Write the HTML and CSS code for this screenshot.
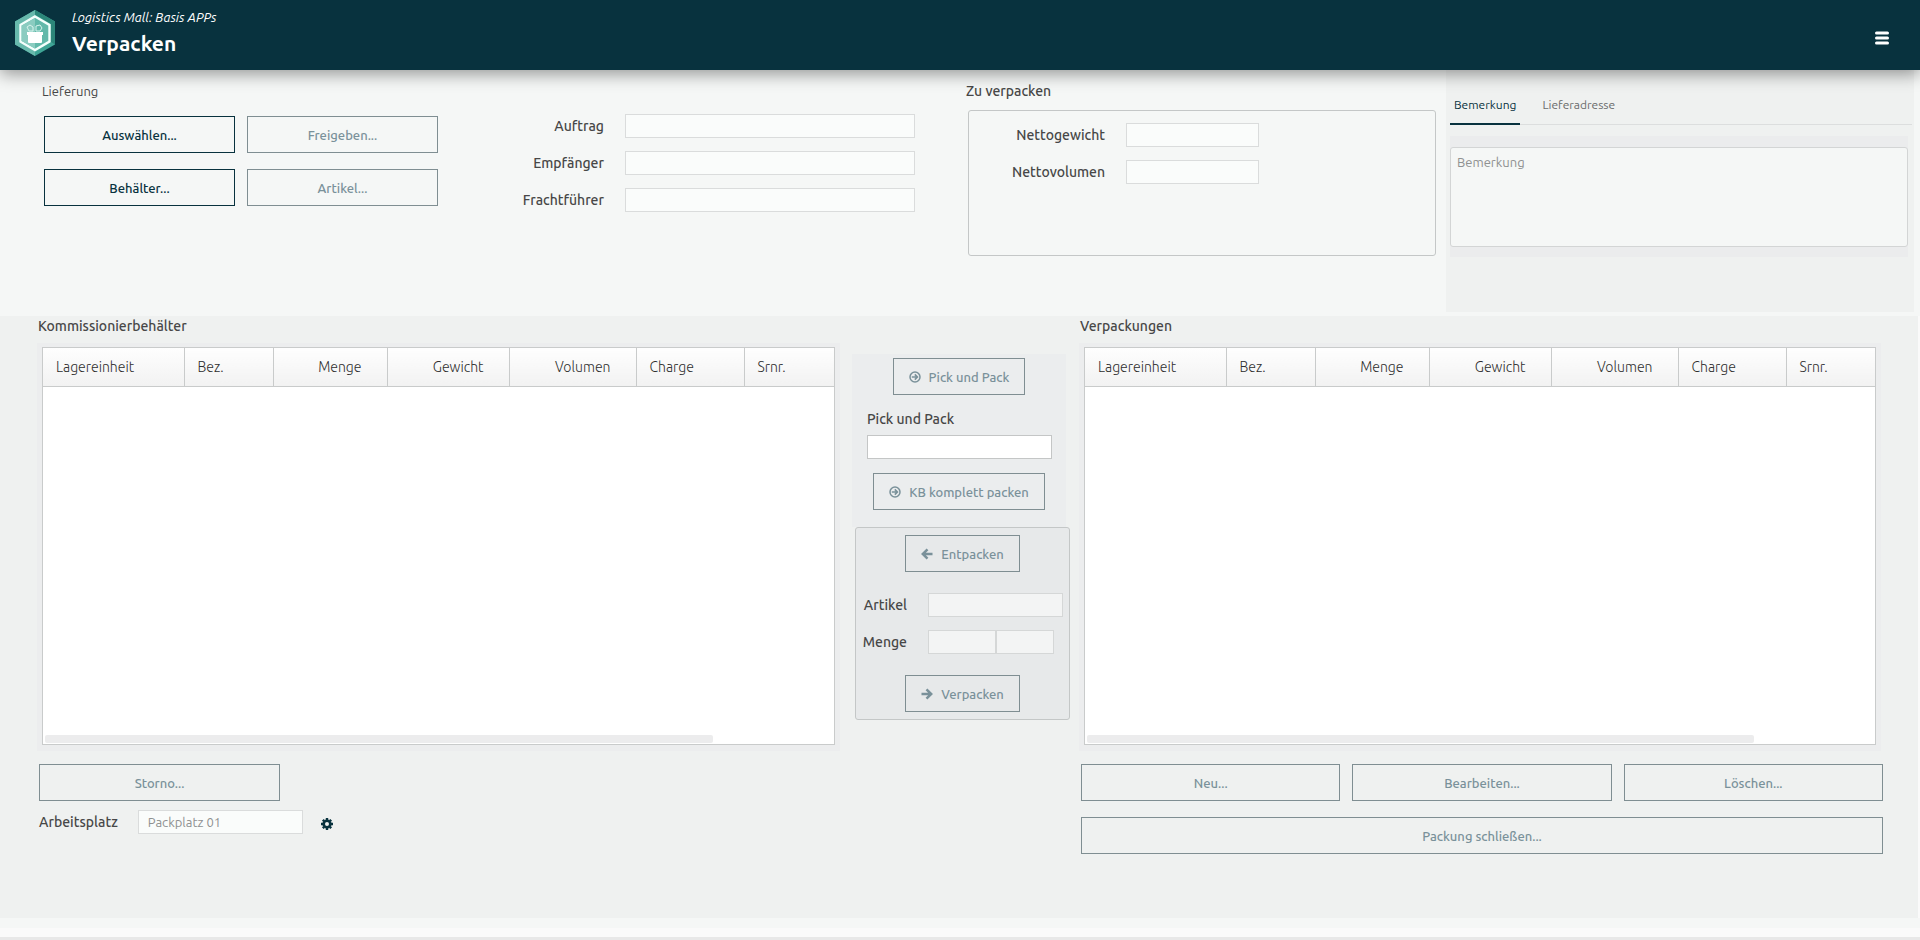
FILE: index.html
```html
<!DOCTYPE html>
<html lang="de">

<head>
    <meta charset="UTF-8">
    <meta name="viewport" content="width=device-width, initial-scale=1.0">
    <title>Verpacken</title>
    <link rel="stylesheet" href="styles.css">
</head>

<body>
    <header class="topbar">
        <svg class="logo" viewBox="0 0 40 46" aria-hidden="true">
            <path d="M20 0 40 11.5V34.500L20 46 0 34.500V11.500Z" fill="#3fa596" />
            <path d="M20 0V46L0 34.500V11.500Z" fill="#68b9ac" />
            <path d="M20 0 40 11.500V34.500L36 32V14L20 4.500Z" fill="#2c8679" />
            <path d="M20 6.500 34.500 15V31.500L20 40 5.500 31.500V15Z" fill="#62b9aa" stroke="#f4fffc" stroke-width="2.400" />
            <path d="M20 8V38.500L6.500 31V15.500Z" fill="#8accc0" />
            <path d="M12 22h16v3h-1v7q0 1-1 1H14q-1 0-1-1v-7h-1z" fill="#fff" />
            <path d="M12 17l3-2 3 2v4h-4zM21 16l4-1 2 3-2 3h-4z" fill="none" stroke="#d8f3ed" stroke-width="1" />
        </svg>
        <div class="titles">
            <p class="suite">Logistics Mall: Basis APPs</p>
            <h1>Verpacken</h1>
        </div>
        <button type="button" class="menu" aria-label="Menü">
            <svg viewBox="0 0 14 14" width="14" height="14">
                <path d="M1.500 2h11M1.500 7h11M1.500 12h11" stroke="#fff" stroke-width="3" stroke-linecap="round" />
            </svg>
        </button>
    </header>

    <main>
        <section class="order">
            <div class="delivery">
                <h2 class="light">Lieferung</h2>
                <div class="delivery-buttons">
                    <button type="button" class="btn">Auswählen...</button>
                    <button type="button" class="btn" disabled>Freigeben...</button>
                    <button type="button" class="btn">Behälter...</button>
                    <button type="button" class="btn" disabled>Artikel...</button>
                </div>
            </div>

            <div class="order-form">
                <label for="auftrag">Auftrag</label>
                <input type="text" id="auftrag" disabled>
                <label for="empfaenger">Empfänger</label>
                <input type="text" id="empfaenger" disabled>
                <label for="frachtfuehrer">Frachtführer</label>
                <input type="text" id="frachtfuehrer" disabled>
            </div>

            <div class="topack">
                <h2>Zu verpacken</h2>
                <div class="topack-box">
                    <label for="gewicht">Nettogewicht</label>
                    <input type="text" id="gewicht" disabled>
                    <label for="volumen">Nettovolumen</label>
                    <input type="text" id="volumen" disabled>
                </div>
            </div>

            <div class="notes">
                <div class="tabs" role="tablist">
                    <button type="button" role="tab" class="tab active" aria-selected="true">Bemerkung</button>
                    <button type="button" role="tab" class="tab" aria-selected="false">Lieferadresse</button>
                </div>
                <div class="note-area">
                    <textarea placeholder="Bemerkung" aria-label="Bemerkung" disabled></textarea>
                </div>
            </div>
        </section>

        <section class="packing">
            <div class="source">
                <h2>Kommissionierbehälter</h2>
                <div class="grid">
                    <table>
                        <colgroup>
                            <col class="c-unit"><col class="c-name"><col class="c-qty"><col class="c-weight"><col class="c-volume"><col class="c-lot"><col>
                        </colgroup>
                        <thead>
                            <tr>
                                <th>Lagereinheit</th>
                                <th>Bez.</th>
                                <th class="num">Menge</th>
                                <th class="num">Gewicht</th>
                                <th class="num">Volumen</th>
                                <th>Charge</th>
                                <th>Srnr.</th>
                            </tr>
                        </thead>
                        <tbody></tbody>
                    </table>
                    <div class="scrollbar"></div>
                </div>
                <button type="button" class="btn storno" disabled>Storno...</button>
                <div class="workplace">
                    <label for="arbeitsplatz">Arbeitsplatz</label>
                    <input type="text" id="arbeitsplatz" value="Packplatz 01" disabled>
                    <button type="button" class="gear" aria-label="Einstellungen">
                        <svg viewBox="0 0 12 12" width="12" height="12">
                            <circle cx="6" cy="6" r="3.300" fill="none" stroke="#08323e" stroke-width="2.600" />
                            <path d="M6 0v2M6 10v2M0 6h2M10 6h2M1.800 1.800l1.400 1.400M8.800 8.800l1.400 1.400M10.200 1.800L8.800 3.200M3.200 8.800l-1.400 1.400" stroke="#08323e" stroke-width="2.400" />
                        </svg>
                    </button>
                </div>
            </div>

            <div class="actions">
                <div class="pick">
                    <button type="button" class="btn icon-btn" disabled>
                        <svg viewBox="0 0 12 12" width="12" height="12">
                            <circle cx="6" cy="6" r="5" fill="none" stroke="currentColor" stroke-width="1.500" />
                            <path d="M2.800 6h5M5.800 3.400 8.400 6 5.800 8.600" fill="none" stroke="currentColor" stroke-width="1.600" />
                        </svg>
                        Pick und Pack
                    </button>
                    <div class="pick-field">
                        <label for="pick">Pick und Pack</label>
                        <input type="text" id="pick">
                    </div>
                    <button type="button" class="btn icon-btn" disabled>
                        <svg viewBox="0 0 12 12" width="12" height="12">
                            <circle cx="6" cy="6" r="5" fill="none" stroke="currentColor" stroke-width="1.500" />
                            <path d="M2.800 6h5M5.800 3.400 8.400 6 5.800 8.600" fill="none" stroke="currentColor" stroke-width="1.600" />
                        </svg>
                        KB komplett packen
                    </button>
                </div>
                <div class="unpack">
                    <button type="button" class="btn icon-btn" disabled>
                        <svg viewBox="0 0 12 12" width="12" height="12">
                            <path d="M11.500 6H2.500M6.500 1.300 1.800 6l4.700 4.700" fill="none" stroke="currentColor" stroke-width="2.500" />
                        </svg>
                        Entpacken
                    </button>
                    <div class="unpack-form">
                        <label for="artikel">Artikel</label>
                        <input type="text" id="artikel" disabled>
                        <label for="menge">Menge</label>
                        <div class="qty">
                            <input type="text" id="menge" disabled>
                            <input type="text" aria-label="Einheit" disabled>
                        </div>
                    </div>
                    <button type="button" class="btn icon-btn" disabled>
                        <svg viewBox="0 0 12 12" width="12" height="12">
                            <path d="M.5 6h9M5.500 1.300 10.200 6l-4.700 4.700" fill="none" stroke="currentColor" stroke-width="2.500" />
                        </svg>
                        Verpacken
                    </button>
                </div>
            </div>

            <div class="target">
                <h2>Verpackungen</h2>
                <div class="grid">
                    <table>
                        <colgroup>
                            <col class="c-unit"><col class="c-name"><col class="c-qty"><col class="c-weight"><col class="c-volume"><col class="c-lot"><col>
                        </colgroup>
                        <thead>
                            <tr>
                                <th>Lagereinheit</th>
                                <th>Bez.</th>
                                <th class="num">Menge</th>
                                <th class="num">Gewicht</th>
                                <th class="num">Volumen</th>
                                <th>Charge</th>
                                <th>Srnr.</th>
                            </tr>
                        </thead>
                        <tbody></tbody>
                    </table>
                    <div class="scrollbar"></div>
                </div>
                <div class="target-buttons">
                    <button type="button" class="btn" disabled>Neu...</button>
                    <button type="button" class="btn" disabled>Bearbeiten...</button>
                    <button type="button" class="btn" disabled>Löschen...</button>
                    <button type="button" class="btn wide" disabled>Packung schließen...</button>
                </div>
            </div>
        </section>
    </main>
    <footer></footer>
</body>

</html>
```
FILE: styles.css
```css
* {
    box-sizing: border-box;
}

body {
    margin: 0;
    min-height: 100vh;
    display: flex;
    flex-direction: column;
    background-color: #fafafa;
    color: #474747;
    font-family: Ubuntu, "Noto Sans", sans-serif;
    font-size: 13px;
    line-height: 20px;
}

h1,
h2,
p {
    margin: 0;
}

h2,
label {
    font-size: 14px;
    font-weight: 500;
    line-height: 20px;
}

h2.light {
    font-size: 13px;
    font-weight: 400;
}

button,
input,
textarea {
    font-family: inherit;
}

/* header */
.topbar {
    height: 70px;
    padding: 0 24px 0 15px;
    display: flex;
    align-items: center;
    background-color: #08323e;
    color: white;
    box-shadow: 0 4px 16px rgba(0, 0, 0, 0.4);
    position: relative;
    z-index: 1;
}

.logo {
    width: 40px;
    height: 46px;
    margin-bottom: 4px;
}

.titles {
    flex: 1;
    margin-left: 17px;
    padding-bottom: 4px;
}

.suite {
    font-size: 13px;
    font-style: italic;
    line-height: 20px;
}

h1 {
    font-size: 21px;
    font-weight: 700;
    line-height: 32px;
}

.menu,
.gear {
    display: flex;
    padding: 7px;
    border: none;
    background: none;
}

.menu {
    margin-top: 6px;
}

/* buttons and inputs */
.btn {
    height: 37px;
    padding: 0 15px;
    border: 1px solid #08323e;
    background: none;
    color: #08323e;
    font-size: 13px;
    font-weight: 500;
}

.btn:disabled {
    border-color: #7f8e92;
    color: #7a919a;
}

.icon-btn {
    display: flex;
    align-items: center;
    gap: 8px;
}

input {
    width: 100%;
    min-width: 0;
    height: 24px;
    padding: 0 9px;
    border: 1px solid #c4c6c6;
    background-color: white;
    font-size: 13px;
}

input:disabled {
    border-color: #dadcdc;
    background-color: #fafcfb;
    color: #8f9191;
}

/* upper part */
.order {
    min-height: 246px;
    padding-right: 6px;
    display: grid;
    grid-template-columns: 482fr 484fr 480fr 468fr;
    background-color: #f5f7f6;
}

.delivery {
    padding: 11px 44px 0 42px;
}

.delivery-buttons {
    margin: 15px 0 0 2px;
    display: grid;
    grid-template-columns: 1fr 1fr;
    gap: 16px 12px;
}

.order-form {
    padding: 44px 51px 0 0;
    display: grid;
    grid-template-columns: 122fr 290fr;
    align-content: start;
    align-items: center;
    gap: 13px 21px;
    text-align: right;
}

.topack {
    padding: 11px 10px 0 0;
}

.topack-box {
    height: 146px;
    margin: 9px 0 0 2px;
    padding-top: 12px;
    display: grid;
    grid-template-columns: 136px 133px;
    align-content: start;
    align-items: center;
    gap: 13px 21px;
    border: 1px solid #c4c7c7;
    border-radius: 3px;
    text-align: right;
}

.notes {
    margin-bottom: 4px;
    padding: 19px 2px 0 4px;
    background-color: #eff1f0;
}

.tabs {
    display: flex;
    gap: 18px;
    border-bottom: 1px solid #dcdede;
}

.tab {
    height: 36px;
    margin-bottom: -1px;
    padding: 0 4px 4px;
    border: none;
    border-bottom: 2px solid transparent;
    background: none;
    color: #6b6d6d;
    font-size: 12px;
}

.tab.active {
    border-bottom-color: #08323e;
    color: #08323e;
}

.note-area {
    margin: 11px 4px 0 0;
    padding: 11px 0 10px;
    background-color: #ebeced;
}

textarea {
    display: block;
    width: 100%;
    height: 100px;
    padding: 4px 6px;
    border: 1px solid #d3d5d5;
    border-radius: 3px;
    background-color: #f5f7f6;
    font-size: 13px;
    line-height: 20px;
    resize: none;
}

textarea::placeholder {
    color: #8f9191;
}

/* lower part */
.packing {
    min-height: 602px;
    margin-right: 2px;
    display: grid;
    grid-template-columns: 852fr 228fr 838fr;
    background-color: #eff1f0;
}

.source {
    padding-left: 38px;
}

.target {
    padding-right: 35px;
}

.grid {
    height: 398px;
    display: flex;
    flex-direction: column;
    justify-content: space-between;
    border: 1px solid #c9cbcb;
    background-color: white;
    box-shadow: 0 1px 0 5px #ecedee;
}

.source .grid {
    margin: 11px 17px 18px 4px;
}

.target .grid {
    margin: 11px 7px 18px 4px;
}

table {
    width: 100%;
    border-collapse: collapse;
    table-layout: fixed;
}

th {
    height: 38px;
    padding: 0 12px 0 13px;
    border-right: 1px solid #c9cbcb;
    border-bottom: 1px solid #c9cbcb;
    background: linear-gradient(#fefefe, #f2f2f2);
    color: #2e2e2e;
    font-size: 14px;
    font-weight: 300;
    text-align: left;
}

th:last-child {
    border-right: none;
}

th.num {
    padding-right: 25px;
    text-align: right;
}

.c-unit {
    width: 141px;
}

.c-name {
    width: 89px;
}

.c-qty {
    width: 114px;
}

.c-weight {
    width: 122px;
}

.c-volume {
    width: 127px;
}

.c-lot {
    width: 108px;
}

.scrollbar {
    height: 8px;
    margin: 0 121px 1px 2px;
    border-radius: 2px;
    background-color: #ececed;
}

.storno {
    width: 241px;
    margin: 1px 0 0 1px;
}

.workplace {
    margin: 9px 0 0 1px;
    display: flex;
    align-items: center;
}

.workplace input {
    width: 165px;
    margin: 0 12px 0 20px;
}

.gear {
    margin: -1px 0;
    padding: 8px 6px 5px;
}

.actions {
    padding: 38px 10px 0 0;
}

.pick {
    margin-right: 4px;
    padding: 4px 0 17px;
    display: flex;
    flex-direction: column;
    align-items: center;
    background-color: #ebedee;
}

.pick-field {
    width: 100%;
    padding: 14px 14px 14px 15px;
}

.pick-field label {
    display: block;
    margin-bottom: 6px;
}

.unpack {
    margin: 0 0 0 3px;
    padding: 7px 0;
    display: flex;
    flex-direction: column;
    align-items: center;
    border: 1px solid #c4c7c7;
    border-radius: 3px;
    background-color: #e7e9ea;
}

.unpack-form {
    width: 100%;
    padding: 21px 6px 21px 4px;
    display: grid;
    grid-template-columns: 47px 1fr;
    align-items: center;
    gap: 13px 21px;
    text-align: right;
}

.unpack input {
    border-color: #d5d7d7;
    background-color: #f3f4f4;
}

.qty {
    padding-right: 9px;
    display: grid;
    grid-template-columns: 68fr 58fr;
}

.target-buttons {
    margin: 19px 0 0 1px;
    display: grid;
    grid-template-columns: repeat(3, 1fr);
    gap: 16px 12px;
}

.wide {
    grid-column: span 3;
}

/* bottom edge */
footer {
    flex: 1;
    min-height: 22px;
    border-top: 10px solid #f5f7f6;
    border-bottom: 3px solid #e8e8e8;
}
```
